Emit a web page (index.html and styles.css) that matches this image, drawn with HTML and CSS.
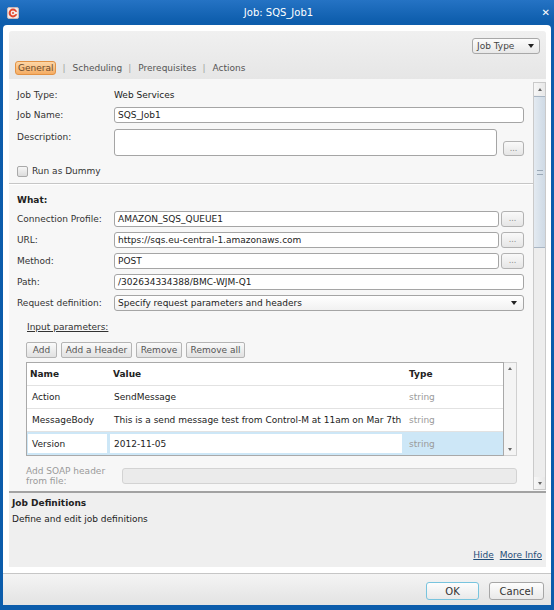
FILE: index.html
```html
<!DOCTYPE html>
<html>
<head>
<meta charset="utf-8">
<title>Job: SQS_Job1</title>
<link rel="stylesheet" href="styles.css">
</head>
<body>
<div class="window">
  <div class="titlebar">
    <div class="tb-left">
      <svg class="app-icon" viewBox="0 0 12 12" width="12" height="12">
        <rect x="0.5" y="0.5" width="11" height="11" rx="1.5" fill="#f4eaea" stroke="#c9b9b9" stroke-width="1"/>
        <circle cx="6" cy="6" r="3.4" fill="none" stroke="#e2472d" stroke-width="2"/>
        <rect x="7.2" y="4.8" width="3.5" height="2.4" fill="#f4eaea"/>
        <circle cx="6" cy="6" r="1" fill="#e2472d"/>
      </svg>
    </div>
    <div class="title">Job: SQS_Job1</div>
    <div class="tb-right"><span class="close">&#x2715;</span></div>
  </div>

  <div class="client">
    <div class="panel">
      <div class="head">
        <div class="head-top">
          <div class="jobtype"><span>Job Type</span><span class="caret"></span></div>
        </div>
        <div class="tabs">
          <span class="tab active">General</span><span class="tsep">|</span><span class="tab">Scheduling</span><span class="tsep">|</span><span class="tab">Prerequisites</span><span class="tsep">|</span><span class="tab">Actions</span>
        </div>
      </div>

      <div class="body">
        <div class="form">
          <div class="row r-jobtype">
            <div class="lbl">Job Type:</div>
            <div class="val">Web Services</div>
          </div>
          <div class="row r-jobname">
            <div class="lbl">Job Name:</div>
            <div class="inp">SQS_Job1</div>
          </div>
          <div class="row r-desc">
            <div class="lbl">Description:</div>
            <div class="inp area"></div>
            <div class="dots d-desc">...</div>
          </div>
          <div class="row r-dummy">
            <span class="chk"></span>
            <span class="chk-text">Run as Dummy</span>
          </div>

          <div class="sep"></div>

          <div class="what">What:</div>
          <div class="row r-first">
            <div class="lbl">Connection Profile:</div>
            <div class="inp">AMAZON_SQS_QUEUE1</div>
            <div class="dots">...</div>
          </div>
          <div class="row r-next">
            <div class="lbl">URL:</div>
            <div class="inp">https://sqs.eu-central-1.amazonaws.com</div>
            <div class="dots">...</div>
          </div>
          <div class="row r-next">
            <div class="lbl">Method:</div>
            <div class="inp">POST</div>
            <div class="dots">...</div>
          </div>
          <div class="row r-next">
            <div class="lbl">Path:</div>
            <div class="inp">/302634334388/BMC-WJM-Q1</div>
          </div>
          <div class="row r-next">
            <div class="lbl">Request definition:</div>
            <div class="inp select"><span>Specify request parameters and headers</span><span class="caret"></span></div>
          </div>

          <div class="params">
            <div class="plabel">Input parameters:</div>
            <div class="btns">
              <span class="btn b-add">Add</span>
              <span class="btn b-header">Add a Header</span>
              <span class="btn b-remove">Remove</span>
              <span class="btn b-removeall">Remove all</span>
            </div>
            <div class="tgrid">
              <div class="tbl">
                <div class="tr th">
                  <div class="c1">Name</div>
                  <div class="c2">Value</div>
                  <div class="c3">Type</div>
                </div>
                <div class="tr">
                  <div class="c1">Action</div>
                  <div class="c2">SendMessage</div>
                  <div class="c3 muted">string</div>
                </div>
                <div class="tr">
                  <div class="c1">MessageBody</div>
                  <div class="c2">This is a send message test from Control-M at 11am on Mar 7th</div>
                  <div class="c3 muted">string</div>
                </div>
                <div class="tr sel">
                  <div class="c1"><span class="edit">Version</span></div>
                  <div class="c2"><span class="edit">2012-11-05</span></div>
                  <div class="c3 muted">string</div>
                </div>
              </div>
              <div class="tscroll">
                <span class="arr up"></span>
                <span class="arr down"></span>
              </div>
            </div>
            <div class="soap">
              <div class="slbl">Add SOAP header<br>from file:</div>
              <div class="sinp"></div>
            </div>
          </div>
        </div>

        <div class="vscroll">
          <div class="sb-btn"><span class="arr up"></span></div>
          <div class="thumb"><span class="grip"></span></div>
          <div class="track"></div>
          <div class="sb-btn"><span class="arr down"></span></div>
        </div>
      </div>

      <div class="hsep"></div>

      <div class="info">
        <div class="ititle">Job Definitions</div>
        <div class="idesc">Define and edit job definitions</div>
        <div class="links"><a class="lnk">Hide</a><a class="lnk">More Info</a></div>
      </div>
    </div>

    <div class="footer">
      <span class="fbtn ok">OK</span>
      <span class="fbtn cancel">Cancel</span>
    </div>
  </div>
</div>
</body>
</html>
```

FILE: styles.css
```css
* { box-sizing: border-box; }
html, body { margin: 0; padding: 0; }
body {
  width: 554px;
  height: 610px;
  overflow: hidden;
  background: #0b5cab;
  font-family: "DejaVu Sans", Verdana, sans-serif;
  font-size: 9px;
  color: #333;
}

.window {
  width: 554px;
  height: 610px;
  display: flex;
  flex-direction: column;
  background: linear-gradient(#2573c4 0, #0d5dac 22px, #0b5cab 100%);
}

/* title bar */
.titlebar {
  height: 25px;
  flex: none;
  display: grid;
  grid-template-columns: 1fr auto 1fr;
  align-items: center;
  color: #fff;
}
.tb-left { padding-left: 7px; display: flex; align-items: center; }
.app-icon { display: block; }
.title { font-size: 10px; padding-left: 3px; }
.tb-right { display: flex; justify-content: flex-end; padding-right: 4px; }
.close { font-size: 10px; font-weight: bold; line-height: 1; }

/* client */
.client {
  flex: 1;
  margin: 0 3px 5px;
  background: #fff;
  border-radius: 4px 4px 0 0;
  padding: 6px 5px 0 6px;
  display: flex;
  flex-direction: column;
}
.panel {
  height: 536px;
  flex: none;
  display: flex;
  flex-direction: column;
  border-radius: 3px 3px 0 0;
  overflow: hidden;
}

/* header */
.head {
  height: 48px;
  flex: none;
  background: linear-gradient(#f0f0f0, #e6e6e6);
  padding: 7px 6px 0 6px;
}
.head-top { display: flex; justify-content: flex-end; height: 16px; }
.jobtype {
  width: 68px;
  height: 16px;
  border: 1px solid #a8a8a8;
  border-radius: 3px;
  background: linear-gradient(#fcfcfc, #e8e8e8);
  display: flex;
  align-items: center;
  padding: 0 5px 0 4px;
  color: #444;
}
.caret {
  width: 0;
  height: 0;
  margin-left: auto;
  border-left: 3px solid transparent;
  border-right: 3px solid transparent;
  border-top: 4px solid #222;
}
.tabs {
  margin-top: 7px;
  height: 14px;
  display: flex;
  align-items: center;
  color: #555;
}
.tab { line-height: 12px; }
.tab.active {
  height: 14px;
  padding: 0 2px;
  border: 1px solid #e39244;
  border-radius: 3px;
  background: linear-gradient(#fdd6a6, #f5ac63);
  color: #6b4a2c;
  display: flex;
  align-items: center;
}
.tsep { color: #a0a0a0; margin: 0 7px 0 6px; }

/* body */
.body {
  height: 412px;
  flex: none;
  display: flex;
  background: #f7f7f7;
}
.form {
  flex: 1;
  min-width: 0;
  overflow: hidden;
  padding: 8px 9px 0 8px;
  display: flex;
  flex-direction: column;
}
.row { display: flex; align-items: center; height: 16px; flex: none; }
.lbl { width: 97px; flex: none; color: #333; }
.val { color: #222; }
.inp {
  flex: 1;
  min-width: 0;
  height: 16px;
  border: 1px solid #a5a5a5;
  border-radius: 3px;
  background: #fff;
  padding: 0 3px;
  display: flex;
  align-items: center;
  color: #222;
  white-space: nowrap;
  overflow: hidden;
}
.dots {
  width: 23px;
  height: 16px;
  flex: none;
  margin-left: 2px;
  border: 1px solid #b2b2b2;
  border-radius: 3px;
  background: linear-gradient(#f9f9f9, #e6e6e6);
  color: #8a8a8a;
  font-size: 8px;
  display: flex;
  align-items: center;
  justify-content: center;
  padding-bottom: 1px;
}
.r-jobtype { margin-top: 0; }
.r-jobname { margin-top: 4px; }
.r-desc { margin-top: 6px; height: 27px; align-items: flex-start; }
.r-desc .lbl { line-height: 16px; }
.inp.area { flex: none; width: 383px; height: 27px; }
.dots.d-desc { align-self: flex-end; margin-left: 6px; width: 21px; height: 15px; }
.r-dummy { margin-top: 9px; height: 12px; }
.chk {
  width: 11px;
  height: 11px;
  border: 1px solid #a9a9a9;
  border-radius: 2px;
  background: linear-gradient(#f6f6f6, #dcdcdc);
}
.chk-text { margin-left: 4px; color: #333; }
.sep {
  margin: 6px -9px 0 -8px;
  height: 2px;
  flex: none;
  border-top: 1px solid #c6c6c6;
  border-bottom: 1px solid #ffffff;
}
.what { margin-top: 8px; height: 14px; line-height: 14px; font-weight: bold; color: #222; flex: none; }
.r-first { margin-top: 4px; }
.r-next { margin-top: 5px; }
.inp.select {
  background: linear-gradient(#ffffff, #f1f1f1);
  padding-right: 6px;
}

/* params */
.params { margin: 9px 7px 0 9px; flex: none; }
.plabel { height: 14px; line-height: 14px; text-decoration: underline; color: #333; padding-left: 1px; }
.btns { margin-top: 8px; display: flex; gap: 4px; height: 16px; }
.btn {
  height: 16px;
  border: 1px solid #b4b4b4;
  border-radius: 2px;
  background: linear-gradient(#fafafa, #e1e1e1);
  color: #555;
  display: flex;
  align-items: center;
  justify-content: center;
}
.b-add { width: 31px; }
.b-header { width: 71px; }
.b-remove { width: 46px; }
.b-removeall { width: 59px; }

.tgrid { margin-top: 4px; display: flex; height: 94px; }
.tbl {
  width: 478px;
  flex: none;
  border: 1px solid #a9a9a9;
  background: #fff;
}
.tr {
  display: flex;
  height: 23px;
  align-items: center;
  border-bottom: 1px solid #e2e2e2;
  color: #222;
  white-space: nowrap;
}
.tr:last-child { border-bottom: 0; }
.th { font-weight: bold; color: #222; }
.c1 { width: 82px; flex: none; padding-left: 5px; }
.c2 { width: 296px; flex: none; padding-left: 5px; overflow: hidden; }
.c3 { flex: 1; padding-left: 4px; }
.th .c1 { padding-left: 3px; }
.th .c2 { padding-left: 4px; }
.muted { color: #9a9a9a; }
.tr.sel { background: #cde7f7; }
.tr.sel .c1 { padding: 0 2px 0 1px; align-self: stretch; display: flex; align-items: center; }
.tr.sel .c2 { padding: 0 3px 0 1px; align-self: stretch; display: flex; align-items: center; }
.edit {
  display: flex;
  align-items: center;
  height: 19px;
  width: 100%;
  background: #fff;
  padding-left: 4px;
}
.tscroll {
  width: 13px;
  flex: none;
  border: 1px solid #d0d0d0;
  border-left: 0;
  background: #f4f4f4;
  display: flex;
  flex-direction: column;
  justify-content: space-between;
  align-items: center;
  padding: 4px 0;
}
.arr {
  width: 0;
  height: 0;
  border-left: 2.5px solid transparent;
  border-right: 2.5px solid transparent;
}
.arr.up { border-bottom: 3px solid #666; }
.arr.down { border-top: 3px solid #666; }

.soap { margin-top: 10px; display: flex; align-items: flex-start; }
.slbl { width: 96px; flex: none; line-height: 10px; color: #9a9a9a; }
.sinp {
  flex: 1;
  height: 16px;
  margin-top: 2px;
  background: #ebebeb;
  border: 1px solid #d3d3d3;
  border-radius: 3px;
}

/* vertical scrollbar */
.vscroll {
  width: 13px;
  flex: none;
  margin: 3px 0 1px;
  background: #ededed;
  border: 1px solid #cacaca;
  display: flex;
  flex-direction: column;
}
.sb-btn {
  height: 12px;
  flex: none;
  display: flex;
  align-items: center;
  justify-content: center;
  background: linear-gradient(90deg, #f7f7f7, #e8e8e8);
}
.thumb {
  height: 152px;
  flex: none;
  margin-top: 1px;
  border-top: 1px solid #a9b6c4;
  border-bottom: 1px solid #a9b6c4;
  background: linear-gradient(90deg, #e3eaf1, #cfdae5);
  display: flex;
  align-items: center;
  justify-content: center;
}
.grip {
  width: 6px;
  height: 5px;
  border-top: 1px solid #9aa8b6;
  border-bottom: 1px solid #9aa8b6;
  position: relative;
}
.track { flex: 1; }

.hsep { height: 2px; flex: none; background: #a2a2a2; }

/* info */
.info {
  flex: 1;
  background: #efefef;
  padding: 4px 4px 6px 3px;
  display: flex;
  flex-direction: column;
  color: #222;
}
.ititle { font-weight: bold; line-height: 13px; }
.idesc { margin-top: 3px; line-height: 13px; }
.links { margin-top: auto; display: flex; justify-content: flex-end; gap: 6px; line-height: 12px; }
.lnk { color: #1f4d78; text-decoration: underline; }

/* footer */
.footer {
  height: 32px;
  flex: none;
  margin: 6px -5px 0 -6px;
  border-top: 1px solid #c6c6c6;
  background: linear-gradient(#f4f4f4, #e3e3e3);
  display: flex;
  justify-content: flex-end;
  align-items: flex-start;
  gap: 10px;
  padding: 8px 7px 0 0;
}
.fbtn {
  height: 18px;
  border: 1px solid #a6a6a6;
  border-radius: 3px;
  background: linear-gradient(#fdfdfd, #e9e9e9);
  font-size: 10px;
  color: #333;
  display: flex;
  align-items: center;
  justify-content: center;
}
.ok { width: 53px; border-color: #78c4de; }
.cancel { width: 55px; }
```
